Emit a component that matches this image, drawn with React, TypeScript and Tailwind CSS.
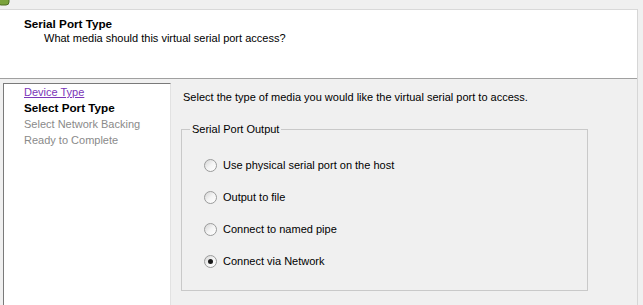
import React from 'react';

const steps = [
  { label: 'Device Type', state: 'done' },
  { label: 'Select Port Type', state: 'current' },
  { label: 'Select Network Backing', state: 'todo' },
  { label: 'Ready to Complete', state: 'todo' },
];

const options = [
  { label: 'Use physical serial port on the host', checked: false },
  { label: 'Output to file', checked: false },
  { label: 'Connect to named pipe', checked: false },
  { label: 'Connect via Network', checked: true },
];

function Radio({ checked }: { checked: boolean }) {
  return (
    <span className="flex h-[13px] w-[13px] shrink-0 items-center justify-center rounded-full border border-[#9a9b9b] bg-gradient-to-br from-[#d4d4d4] via-[#f4f4f4] to-white">
      {checked && <span className="h-[5px] w-[5px] rounded-full bg-[#1a1a1a]" />}
    </span>
  );
}

export default function App() {
  return (
    <div
      className="flex h-[305px] w-[643px] flex-col overflow-hidden bg-[#f0f0f0] text-[11px] text-black"
      style={{ fontFamily: '"Liberation Sans", Arial, sans-serif' }}
    >
      {/* title strip */}
      <div className="h-[9px] shrink-0">
        <svg width="10" height="9" viewBox="0 0 10 9">
          <rect x="-2" y="-6" width="11" height="11" rx="3" fill="#7ba33c" stroke="#4f6e22" strokeWidth="1" />
        </svg>
      </div>

      <div className="mr-[5px] flex flex-1 flex-col border-r border-[#d6d6d6]">
        {/* header */}
        <div className="h-[70px] shrink-0 border-t border-b border-t-[#d9d9d9] border-b-[#a0a0a0] bg-white pl-[24px] pt-[7px]">
          <div className="text-[11.7px] font-bold leading-[14px]">Serial Port Type</div>
          <div className="pl-[20px] leading-[14px]">What media should this virtual serial port access?</div>
        </div>

        {/* body */}
        <div className="flex flex-1 pt-[4px]">
          <div className="ml-[3px] w-[168px] shrink-0 border-l border-t border-r border-l-[#7a7a7a] border-t-[#7a7a7a] border-r-[#e2e2e2] bg-white pl-[20px]">
            {steps.map((s) => (
              <div
                key={s.label}
                className={
                  s.state === 'done'
                    ? 'leading-[16px] text-[#7b36b8] underline'
                    : s.state === 'current'
                    ? 'text-[11.7px] leading-[16px] font-bold'
                    : 'leading-[16px] text-[#8a8a8a]'
                }
              >
                {s.label}
              </div>
            ))}
          </div>

          <div className="flex flex-1 flex-col pl-[10px] pt-[7px]">
            <div className="pl-[2px] leading-[14px]">
              Select the type of media you would like the virtual serial port to access.
            </div>

            <fieldset className="mt-[18px] h-[169px] w-[407px] border border-[#c9c9c9]">
              <legend className="ml-[8px] px-[2px] leading-[14px]">Serial Port Output</legend>
              <div className="flex flex-col gap-[16px] pl-[22px] pt-[21px]">
                {options.map((o) => (
                  <label key={o.label} className="flex h-[16px] items-center gap-[6px]">
                    <Radio checked={o.checked} />
                    <span>{o.label}</span>
                  </label>
                ))}
              </div>
            </fieldset>
          </div>
        </div>
      </div>
    </div>
  );
}
